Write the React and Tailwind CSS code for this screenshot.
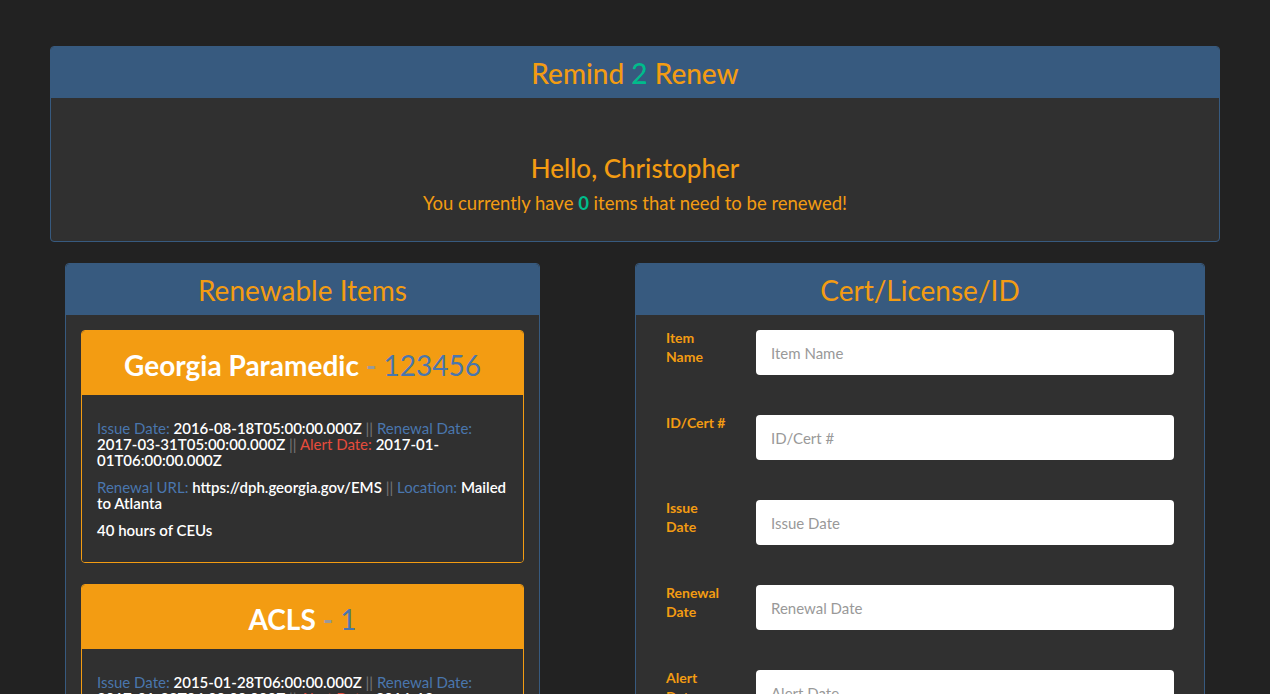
const ORANGE = "text-[#f39c12]";

const items = [
  {
    name: "Georgia Paramedic",
    id: "123456",
    issue: "2016-08-18T05:00:00.000Z",
    renewal: "2017-03-31T05:00:00.000Z",
    alert: "2017-01-01T06:00:00.000Z",
    url: "https://dph.georgia.gov/EMS",
    location: "Mailed to Atlanta",
    notes: "40 hours of CEUs",
  },
  {
    name: "ACLS",
    id: "1",
    issue: "2015-01-28T06:00:00.000Z",
    renewal: "2017-01-28T06:00:00.000Z",
    alert: "2016-12-01T06:00:00.000Z",
    url: "https://www.heart.org",
    location: "Online",
    notes: "Recertification class",
  },
];

const fields = ["Item Name", "ID/Cert #", "Issue Date", "Renewal Date", "Alert Date", "Renewal URL", "Location"];

const Sep = () => <span className="text-[#777] font-normal"> || </span>;

const ItemCard = ({ item }) => (
  <div className="rounded border border-[#f39c12] mb-[21px] overflow-hidden">
    <div className="bg-[#f39c12] h-[64px] pt-[4px] flex items-center justify-center text-[28px]">
      <span className="text-white font-bold">{item.name}</span>
      <span className="text-[#999] font-bold mx-[7px]">-</span>
      <span className="text-[#4a76ad]">{item.id}</span>
    </div>
    <div className="bg-[#303030] px-[15px] pt-[25px] pb-[24px] text-[15px] leading-[16px] text-white font-semibold">
      <p>
        <span className="text-[#4a76ad] font-normal">Issue Date: </span>
        {item.issue}
        <Sep />
        <span className="text-[#4a76ad] font-normal">Renewal Date: </span>
        {item.renewal}
        <Sep />
        <span className="text-[#e74c3c] font-normal">Alert Date: </span>
        {item.alert}
      </p>
      <p className="mt-[11px]">
        <span className="text-[#4a76ad] font-normal">Renewal URL: </span>
        {item.url}
        <Sep />
        <span className="text-[#4a76ad] font-normal">Location: </span>
        {item.location}
      </p>
      <p className="mt-[11px]">{item.notes}</p>
    </div>
  </div>
);

const PanelHead = ({ children }) => (
  <div className="bg-[#375a7f] h-[51px] flex items-center justify-center rounded-t">
    <h2 className={`${ORANGE} text-[28px] leading-none`}>{children}</h2>
  </div>
);

export default function App() {
  return (
    <div className="min-h-screen bg-[#222222] pt-[46px] font-['Lato','Liberation_Sans',sans-serif]">
      <div className="w-[1170px] mx-auto">
        {/* Top banner */}
        <div className="rounded border border-[#375a7f] bg-[#303030] overflow-hidden">
          <div className="bg-[#375a7f] h-[51px] flex items-center justify-center">
            <h1 className={`${ORANGE} text-[28px] leading-none font-medium`}>
              Remind <span className="text-[#00bc8c]">2</span> Renew
            </h1>
          </div>
          <div className="pt-[55px] pb-[26px] text-center">
            <h2 className={`${ORANGE} text-[26px] leading-[30px] font-medium`}>Hello, Christopher</h2>
            <p className={`${ORANGE} text-[18.5px] leading-[24px] mt-[8px]`}>
              You currently have <span className="text-[#00bc8c] font-bold">0</span> items that need to be renewed!
            </p>
          </div>
        </div>

        <div className="flex px-[15px] mt-[21px] gap-[95px]">
          {/* Renewable items */}
          <div className="w-[475px] rounded border border-[#375a7f] bg-[#303030]">
            <PanelHead>Renewable Items</PanelHead>
            <div className="p-[15px]">
              {items.map((it) => (
                <ItemCard key={it.name} item={it} />
              ))}
            </div>
          </div>

          {/* Form */}
          <div className="w-[570px] rounded border border-[#375a7f] bg-[#303030] self-start">
            <PanelHead>Cert/License/ID</PanelHead>
            <div className="px-[30px] pt-[15px] pb-[20px]">
              {fields.map((f) => (
                <div key={f} className="flex mb-[40px]">
                  <label className={`${ORANGE} w-[60px] mr-[30px] -mt-[2px] text-[14px] leading-[19px] font-bold`}>
                    {f}
                  </label>
                  <input
                    placeholder={f}
                    className="flex-1 h-[45px] rounded bg-white px-[15px] text-[15px] text-[#222] placeholder:text-[#999] outline-none"
                  />
                </div>
              ))}
            </div>
          </div>
        </div>
      </div>
    </div>
  );
}
